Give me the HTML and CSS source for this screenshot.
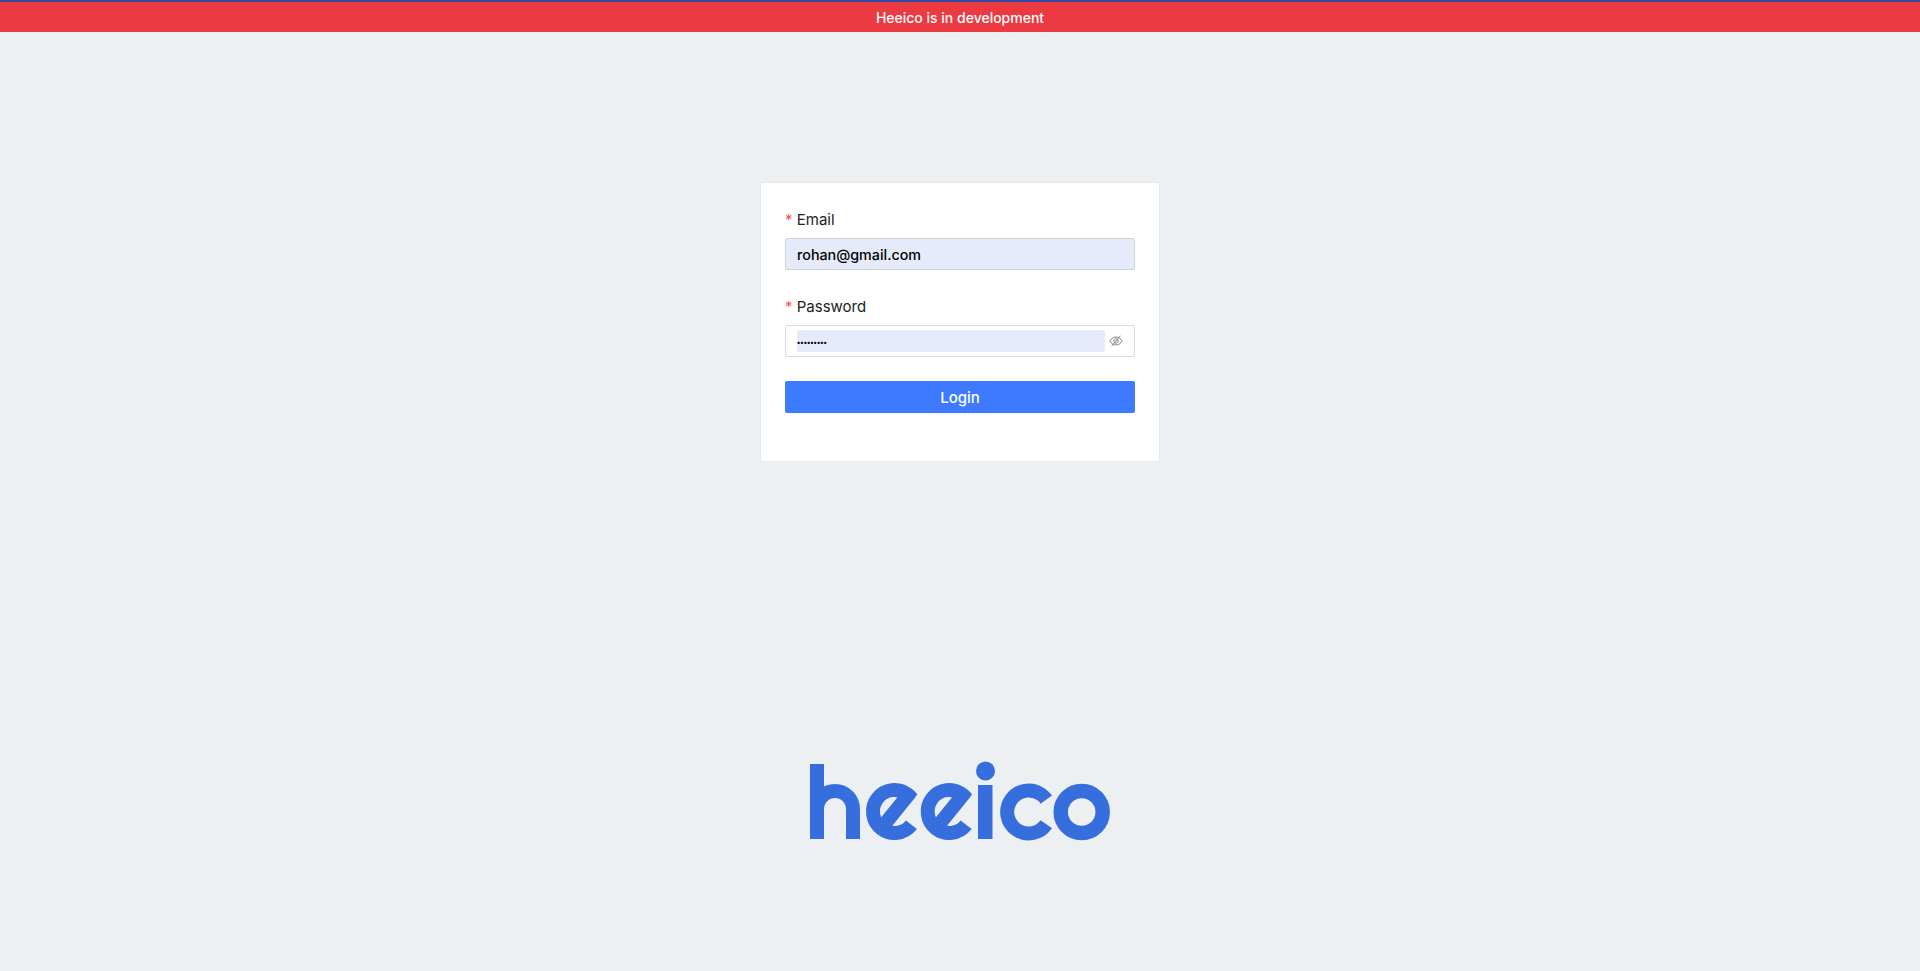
FILE: index.html
```html
<!DOCTYPE html>
<html lang="en">
<head>
    <meta charset="UTF-8">
    <title>Heeico</title>
    <link rel="stylesheet" href="styles.css">
</head>
<body>

    <div class="dev-banner">Heeico is in development</div>

    <main class="page">
        <form class="login-card">
            <div class="field">
                <label class="field-label" for="email"><span class="required">*</span> Email</label>
                <input class="text-input" id="email" type="text" value="rohan@gmail.com">
            </div>
            <div class="field">
                <label class="field-label" for="password"><span class="required">*</span> Password</label>
                <div class="password-box">
                    <input class="password-input" id="password" type="password" value="password1">
                    <svg class="eye-icon" viewBox="0 0 16 16" width="14" height="14" fill="none" stroke="#808080" stroke-width="1.1">
                        <path d="M1 8c1.800-3 4.100-4.500 7-4.500S13.200 5 15 8c-1.800 3-4.100 4.500-7 4.500S2.800 11 1 8z"/>
                        <circle cx="8" cy="8" r="2.500"/>
                        <path d="M3 14L13 2"/>
                    </svg>
                </div>
            </div>
            <button class="login-button" type="button">Login</button>
        </form>

        <svg class="logo" width="300" height="82" viewBox="0 0 300 82" role="img" aria-label="heeico">
            <g fill="none" stroke="#366fdd" stroke-width="14">
                <!-- h -->
                <rect x="0" y="4" width="14" height="75" fill="#366fdd" stroke="none"/>
                <circle cx="25" cy="49" r="18" pathLength="360" stroke-dasharray="180 180" transform="rotate(180 25 49)"/>
                <rect x="36" y="49" width="14" height="30" fill="#366fdd" stroke="none"/>
                <!-- e e -->
                <circle cx="84.500" cy="51.500" r="21.500" pathLength="360" stroke-dasharray="286 74" transform="rotate(38 84.500 51.500)"/>
                <line x1="71" y1="68.600" x2="100.600" y2="32.100"/>
                <circle cx="139.200" cy="51.500" r="21.500" pathLength="360" stroke-dasharray="286 74" transform="rotate(38 139.200 51.500)"/>
                <line x1="125.700" y1="68.600" x2="155.300" y2="32.100"/>
                <!-- i -->
                <rect x="168" y="25" width="14.500" height="54" fill="#366fdd" stroke="none"/>
                <circle cx="175.500" cy="11" r="9.500" fill="#366fdd" stroke="none"/>
                <!-- c o -->
                <circle cx="218.700" cy="52" r="21.500" pathLength="360" stroke-dasharray="290 70" transform="rotate(35 218.700 52)"/>
                <circle cx="271.700" cy="52" r="21" stroke-width="14.500"/>
            </g>
        </svg>
    </main>

</body>
</html>
```

FILE: styles.css
```css
* {
    box-sizing: border-box;
}

html, body {
    height: 100%;
}

body {
    margin: 0;
    font-family: Inter, "Liberation Sans", sans-serif;
    font-size: 15px;
    color: #222;
    background-color: #edf0f3;
    display: flex;
    flex-direction: column;
}

.dev-banner {
    height: 32px;
    line-height: 32px;
    border-top: 2px solid #2f4a9e;
    background-color: #ec3a42;
    color: #fff;
    font-weight: 500;
    font-size: 14px;
    text-align: center;
}

.page {
    flex: 1;
    display: flex;
    flex-direction: column;
    align-items: center;
    padding-top: 150px;
}

.login-card {
    width: 400px;
    height: 280px;
    padding: 24px;
    background-color: #fff;
    border: 1px solid #e8e8e8;
    border-radius: 2px;
}

.field {
    margin-bottom: 24px;
}

.field-label {
    display: block;
    height: 31px;
    line-height: 26px;
}

.required {
    color: #ff4d4f;
}

.text-input {
    display: block;
    width: 100%;
    height: 32px;
    padding: 0 11px;
    font: inherit;
    font-size: 14.300px;
    font-weight: 500;
    color: #000;
    background-color: #e5ebfb;
    border: 1px solid #d0d0d4;
    border-radius: 2px;
    outline: none;
}

.password-box {
    display: flex;
    align-items: center;
    gap: 4px;
    height: 32px;
    padding: 0 11px;
    border: 1px solid #d9d9d9;
    border-radius: 2px;
}

.password-input {
    flex: 1;
    min-width: 0;
    height: 22px;
    padding: 3px 0 0;
    font: inherit;
    font-size: 7px;
    font-weight: 700;
    color: #000;
    background-color: #e5ebfb;
    border: none;
    border-radius: 2px;
    outline: none;
}

.login-button {
    display: block;
    width: 100%;
    height: 32px;
    font: inherit;
    font-weight: 500;
    color: #fff;
    background-color: #3d7aff;
    border: none;
    border-radius: 2px;
    box-shadow: 0 2px 0 rgba(0, 0, 0, 0.02);
}

.logo {
    margin-top: 298px;
}
```
